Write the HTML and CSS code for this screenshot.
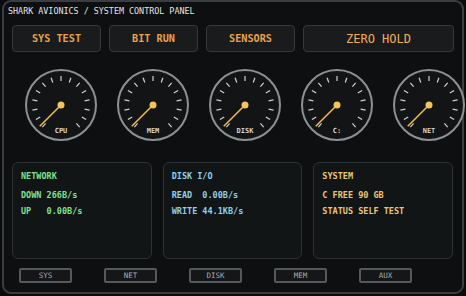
FILE: index.html
```html
<!DOCTYPE html>
<html lang="en">
<head>
    <meta charset="UTF-8">
    <meta name="viewport" content="width=device-width, initial-scale=1.0">
    <title>Shark Avionics - System Control Panel</title>
    <link rel="stylesheet" href="styles.css">
</head>
<body>
    <svg class="defs" aria-hidden="true">
        <defs>
            <symbol id="dial" viewBox="0 0 72 72">
                <circle class="dial-face" cx="36" cy="36" r="35"/>
                <g class="dial-ticks">
                    <line x1="36" y1="7" x2="36" y2="12" transform="rotate(-140 36 36)"/>
                    <line x1="36" y1="7" x2="36" y2="12" transform="rotate(-120 36 36)"/>
                    <line x1="36" y1="7" x2="36" y2="12" transform="rotate(-100 36 36)"/>
                    <line x1="36" y1="7" x2="36" y2="12" transform="rotate(-80 36 36)"/>
                    <line x1="36" y1="7" x2="36" y2="12" transform="rotate(-60 36 36)"/>
                    <line x1="36" y1="7" x2="36" y2="12" transform="rotate(-40 36 36)"/>
                    <line x1="36" y1="7" x2="36" y2="12" transform="rotate(-20 36 36)"/>
                    <line x1="36" y1="7" x2="36" y2="12"/>
                    <line x1="36" y1="7" x2="36" y2="12" transform="rotate(20 36 36)"/>
                    <line x1="36" y1="7" x2="36" y2="12" transform="rotate(40 36 36)"/>
                    <line x1="36" y1="7" x2="36" y2="12" transform="rotate(60 36 36)"/>
                    <line x1="36" y1="7" x2="36" y2="12" transform="rotate(80 36 36)"/>
                    <line x1="36" y1="7" x2="36" y2="12" transform="rotate(100 36 36)"/>
                    <line x1="36" y1="7" x2="36" y2="12" transform="rotate(120 36 36)"/>
                    <line x1="36" y1="7" x2="36" y2="12" transform="rotate(140 36 36)"/>
                </g>
                <line class="dial-needle" x1="36" y1="36" x2="36" y2="6" transform="rotate(-135 36 36)"/>
                <circle class="dial-pivot" cx="36" cy="36" r="3.5"/>
            </symbol>
        </defs>
    </svg>

    <div class="panel">
        <div class="title">SHARK AVIONICS / SYSTEM CONTROL PANEL</div>

        <div class="actions">
            <button class="action">SYS TEST</button>
            <button class="action">BIT RUN</button>
            <button class="action">SENSORS</button>
            <button class="action action-wide">ZERO HOLD</button>
        </div>

        <div class="gauges">
            <svg class="gauge" viewBox="0 0 72 72"><use href="#dial"/><text x="36" y="64">CPU</text></svg>
            <svg class="gauge" viewBox="0 0 72 72"><use href="#dial"/><text x="36" y="64">MEM</text></svg>
            <svg class="gauge" viewBox="0 0 72 72"><use href="#dial"/><text x="36" y="64">DISK</text></svg>
            <svg class="gauge" viewBox="0 0 72 72"><use href="#dial"/><text x="36" y="64">C:</text></svg>
            <svg class="gauge" viewBox="0 0 72 72"><use href="#dial"/><text x="36" y="64">NET</text></svg>
        </div>

        <div class="cards">
            <div class="card card-net">
                <div class="card-title">NETWORK</div>
                <div class="card-line">DOWN 266B/s</div>
                <div class="card-line">UP&nbsp;&nbsp;&nbsp;0.00B/s</div>
            </div>
            <div class="card card-disk">
                <div class="card-title">DISK I/O</div>
                <div class="card-line">READ&nbsp;&nbsp;0.00B/s</div>
                <div class="card-line">WRITE 44.1KB/s</div>
            </div>
            <div class="card card-sys">
                <div class="card-title">SYSTEM</div>
                <div class="card-line">C FREE 90 GB</div>
                <div class="card-line">STATUS SELF TEST</div>
            </div>
        </div>

        <div class="tabs">
            <button class="tab">SYS</button>
            <button class="tab">NET</button>
            <button class="tab">DISK</button>
            <button class="tab">MEM</button>
            <button class="tab">AUX</button>
        </div>
    </div>
</body>
</html>
```

FILE: styles.css
```css
* {
    box-sizing: border-box;
}

body {
    margin: 0;
    background-color: #0a0b0c;
    font-family: "DejaVu Sans Mono", "Liberation Mono", monospace;
}

.defs {
    position: absolute;
    width: 0;
    height: 0;
}

.panel {
    margin: 0 2px;
    height: 294px;
    border: 2px solid #3a3e42;
    border-radius: 9px;
    background-color: #0d0f11;
    padding: 4px 4px 0 4px;
}

.title {
    font-size: 8.4px;
    line-height: 11px;
    color: #e2e4e6;
}

/* top action buttons */
.actions {
    display: grid;
    grid-template-columns: 89px 89px 89px 1fr;
    gap: 8px;
    margin: 8px 4px 0 4px;
}

.action {
    height: 27px;
    background-color: #191b1d;
    border: 1px solid #36393c;
    border-radius: 4px;
    color: #eba24c;
    font-family: inherit;
    font-weight: bold;
    font-size: 10.2px;
    padding: 0;
}

.action-wide {
    font-size: 12px;
    font-weight: normal;
    color: #f0ad58;
}

/* dials */
.gauges {
    display: flex;
    gap: 20px;
    margin: 17px 0 0 17px;
}

.gauge {
    flex: none;
    width: 72px;
    height: 72px;
    overflow: visible;
}

.gauge text {
    font-family: "DejaVu Sans Mono", monospace;
    font-size: 7px;
    font-weight: bold;
    fill: #d4d6d8;
    text-anchor: middle;
}

.dial-face {
    fill: #121416;
    stroke: #8e9194;
    stroke-width: 2;
}

.dial-ticks line {
    stroke: #d0d3d5;
    stroke-width: 1.2;
}

.dial-needle {
    stroke: #eeb94e;
    stroke-width: 1.6;
}

.dial-pivot {
    fill: #f3c45c;
}

/* readout cards */
.cards {
    display: grid;
    grid-template-columns: repeat(3, 1fr);
    gap: 11px;
    margin: 21px 5px 0 4px;
}

.card {
    height: 97px;
    background-color: #111516;
    border: 1.5px solid #2c3134;
    border-radius: 6px;
    padding: 8px 8px;
    font-size: 8.5px;
    font-weight: bold;
    line-height: 10px;
}

.card-title {
    margin-bottom: 9px;
}

.card-line {
    margin-bottom: 6px;
    white-space: nowrap;
}

.card-net { color: #7fe28e; }
.card-disk { color: #8fd0ea; }
.card-sys { color: #ebc676; }

/* bottom tabs */
.tabs {
    display: flex;
    gap: 32px;
    margin: 9px 0 0 11px;
}

.tab {
    width: 53px;
    height: 15px;
    background-color: #141618;
    border: 2px solid #55595c;
    border-radius: 2px;
    color: #a9acae;
    font-family: inherit;
    font-size: 7.5px;
    padding: 0;
}
```
